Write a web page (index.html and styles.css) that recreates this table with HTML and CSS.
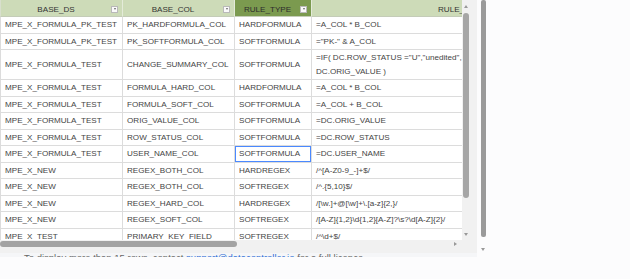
FILE: index.html
```html
<!DOCTYPE html>
<html>
<head>
<meta charset="utf-8">
<link rel="stylesheet" href="styles.css">
</head>
<body>
<div class="page">
  <div class="main">
    <div class="grid-box">
      <div class="grid-top">
        <div class="viewport">
          <table class="grid">
            <colgroup>
              <col class="c1"><col class="c2"><col class="c3"><col class="c4">
            </colgroup>
            <thead>
              <tr>
                <th class="first"><div class="th-in"><span class="th-label">BASE_DS</span><span class="filter"></span></div></th>
                <th><div class="th-in"><span class="th-label">BASE_COL</span><span class="filter"></span></div></th>
                <th class="sel"><div class="th-in"><span class="th-label">RULE_TYPE</span><span class="filter"></span></div></th>
                <th><div class="th-in"><span class="th-label">RULE_VALUE</span><span class="filter"></span></div></th>
              </tr>
            </thead>
            <tbody>
              <tr><td class="first">MPE_X_FORMULA_PK_TEST</td><td>PK_HARDFORMULA_COL</td><td>HARDFORMULA</td><td>=A_COL * B_COL</td></tr>
              <tr><td class="first">MPE_X_FORMULA_PK_TEST</td><td>PK_SOFTFORMULA_COL</td><td>SOFTFORMULA</td><td>="PK-" &amp; A_COL</td></tr>
              <tr><td class="first">MPE_X_FORMULA_TEST</td><td>CHANGE_SUMMARY_COL</td><td>SOFTFORMULA</td><td>=IF( DC.ROW_STATUS ="U","unedited",<br>DC.ORIG_VALUE )</td></tr>
              <tr><td class="first">MPE_X_FORMULA_TEST</td><td>FORMULA_HARD_COL</td><td>HARDFORMULA</td><td>=A_COL * B_COL</td></tr>
              <tr><td class="first">MPE_X_FORMULA_TEST</td><td>FORMULA_SOFT_COL</td><td>SOFTFORMULA</td><td>=A_COL + B_COL</td></tr>
              <tr><td class="first">MPE_X_FORMULA_TEST</td><td>ORIG_VALUE_COL</td><td>SOFTFORMULA</td><td>=DC.ORIG_VALUE</td></tr>
              <tr><td class="first">MPE_X_FORMULA_TEST</td><td>ROW_STATUS_COL</td><td>SOFTFORMULA</td><td>=DC.ROW_STATUS</td></tr>
              <tr><td class="first">MPE_X_FORMULA_TEST</td><td>USER_NAME_COL</td><td class="current">SOFTFORMULA</td><td>=DC.USER_NAME</td></tr>
              <tr><td class="first">MPE_X_NEW</td><td>REGEX_BOTH_COL</td><td>HARDREGEX</td><td>/^[A-Z0-9_-]+$/</td></tr>
              <tr><td class="first">MPE_X_NEW</td><td>REGEX_BOTH_COL</td><td>SOFTREGEX</td><td>/^.{5,10}$/</td></tr>
              <tr><td class="first">MPE_X_NEW</td><td>REGEX_HARD_COL</td><td>HARDREGEX</td><td>/[\w.]+@[\w]+\.[a-z]{2,}/</td></tr>
              <tr><td class="first">MPE_X_NEW</td><td>REGEX_SOFT_COL</td><td>SOFTREGEX</td><td>/[A-Z]{1,2}\d{1,2}[A-Z]?\s?\d[A-Z]{2}/</td></tr>
              <tr><td class="first">MPE_X_TEST</td><td>PRIMARY_KEY_FIELD</td><td>SOFTREGEX</td><td>/^\d+$/</td></tr>
            </tbody>
          </table>
        </div>
        <div class="vscroll">
          <span class="arrow up"></span>
          <span class="vthumb"></span>
          <span class="arrow down"></span>
        </div>
      </div>
      <div class="hscroll">
        <span class="hthumb"></span>
        <span class="arrow right"></span>
      </div>
    </div>
    <div class="notice">
      <p class="notice-text">To display more than 15 rows, contact <a class="notice-link">support@datacontroller.io</a> for a full licence.</p>
    </div>
  </div>
  <div class="page-scroll">
    <span class="pthumb"></span>
    <span class="arrow down pdown"></span>
  </div>
</div>
</body>
</html>
```
FILE: styles.css
```css
* { box-sizing: border-box; }
html, body { margin: 0; padding: 0; }
body {
  background: #fcfcfd;
  font-family: "Liberation Sans", Arial, sans-serif;
}
.page {
  display: flex;
  height: 279px;
  overflow: hidden;
}
.main {
  width: 477px;
  display: flex;
  flex-direction: column;
}
.grid-box {
  width: 477px;
  background: #f1f1f1;
  padding-bottom: 5px;
}
.grid-top {
  display: flex;
  height: 240px;
}
.viewport {
  width: 462px;
  height: 240px;
  overflow: hidden;
  background: #fff;
}
.grid {
  border-collapse: separate;
  border-spacing: 0;
  table-layout: fixed;
  width: 628px;
  font-size: 8.1px;
  color: #444;
}
.c1 { width: 123px; }
.c2 { width: 112px; }
.c3 { width: 77px; }
.c4 { width: 316px; }
.grid th {
  background: #cddbb8;
  color: #333;
  font-weight: normal;
  padding: 4px 0 0 0;
  line-height: 12px;
  border-right: 1px solid #e4ebd9;
  border-bottom: 1px solid #c4ccb8;
  white-space: nowrap;
  overflow: hidden;
}
.grid th.first { border-left: 1px solid #d8dfcd; }
.grid th.sel { background: #7b9a4f; color: #2c2c2c; }
.th-in {
  display: flex;
  align-items: center;
  padding-right: 4px;
}
.th-label {
  flex: 1;
  text-align: center;
}
.filter {
  width: 7px;
  height: 7px;
  background: #fafafa;
  border: 1px solid #b9b9b9;
  display: flex;
  align-items: center;
  justify-content: center;
  margin-top: -2px;
}
.filter::after {
  content: "";
  border-left: 1.5px solid transparent;
  border-right: 1.5px solid transparent;
  border-top: 2px solid #666;
}
.grid td {
  padding: 1px 4px 1px 4px;
  line-height: 13.5px;
  border-right: 1px solid #dcdcdc;
  border-bottom: 1px solid #dcdcdc;
  white-space: nowrap;
  overflow: hidden;
  background: #fff;
}
.grid td.first { border-left: 1px solid #dcdcdc; }
.grid td.current { box-shadow: inset 0 0 0 1px #4b89ff; }

.vscroll {
  width: 8px;
  height: 240px;
  background: #f1f1f1;
  display: flex;
  flex-direction: column;
  align-items: center;
  padding-top: 5px;
}
.arrow { display: block; width: 0; height: 0; }
.arrow.up {
  border-left: 2.5px solid transparent;
  border-right: 2.5px solid transparent;
  border-bottom: 3px solid #999;
}
.arrow.down {
  border-left: 2.5px solid transparent;
  border-right: 2.5px solid transparent;
  border-top: 3px solid #999;
}
.arrow.right {
  border-top: 2.5px solid transparent;
  border-bottom: 2.5px solid transparent;
  border-left: 3px solid #999;
}
.vthumb {
  display: block;
  width: 6px;
  height: 185px;
  margin-top: 5px;
  border-radius: 3px;
  background: #a6a6a6;
}
.vscroll .down { margin-top: 35px; }
.hscroll {
  width: 470px;
  height: 8px;
  display: flex;
  align-items: center;
  background: #f1f1f1;
}
.hthumb {
  display: block;
  width: 237px;
  height: 6px;
  border-radius: 3px;
  background: #a3a3a3;
}
.hscroll .right { margin-left: 217px; }
.notice {
  height: 4px;
  overflow: hidden;
  background: #f5f6f8;
  padding-left: 24px;
}
.notice-text {
  margin: -1px 0 0 0;
  font-size: 9.5px;
  line-height: 12px;
  color: #666;
  white-space: nowrap;
}
.notice-link { color: #2f6fd6; }
.page-scroll {
  width: 10px;
  display: flex;
  flex-direction: column;
  align-items: center;
  padding-left: 2px;
}
.pthumb {
  display: block;
  width: 5px;
  height: 237px;
  border-radius: 2px;
  background: #9a9a9a;
}
.pdown { margin-top: 11px; }
```
